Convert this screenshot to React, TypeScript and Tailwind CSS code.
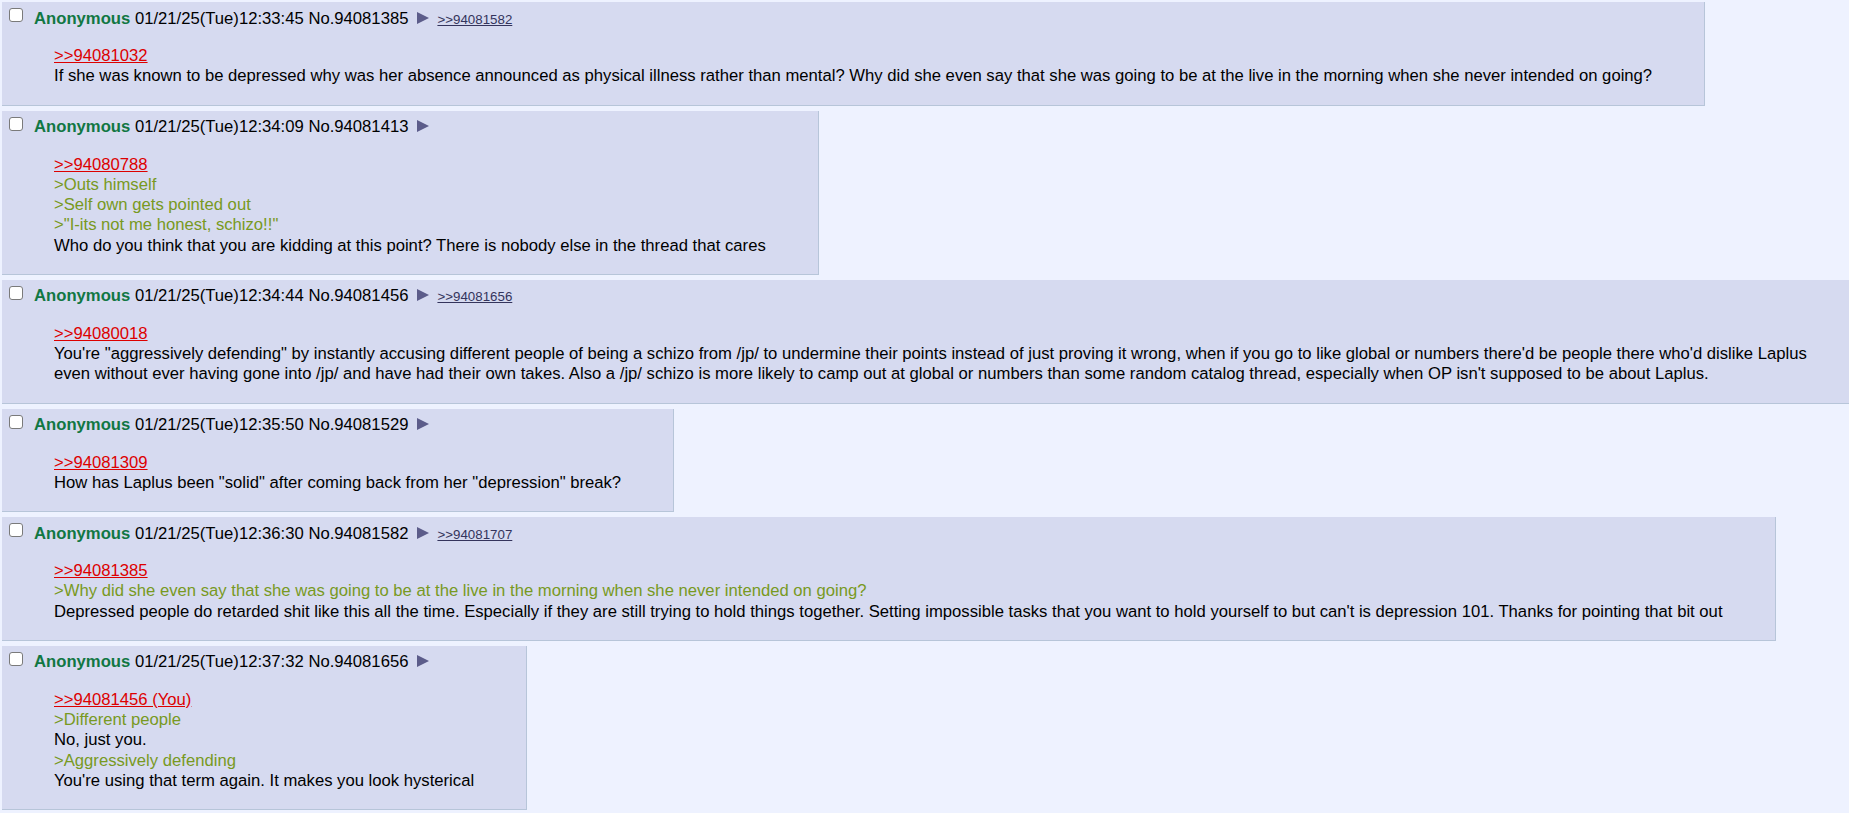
import React from "react";

type Line = { kind: "quote" | "green" | "text"; text: string };
type Post = { time: string; no: string; backlink?: string; lines: Line[] };

const posts: Post[] = [
  {
    time: "01/21/25(Tue)12:33:45",
    no: "94081385",
    backlink: ">>94081582",
    lines: [
      { kind: "quote", text: ">>94081032" },
      {
        kind: "text",
        text: "If she was known to be depressed why was her absence announced as physical illness rather than mental? Why did she even say that she was going to be at the live in the morning when she never intended on going?",
      },
    ],
  },
  {
    time: "01/21/25(Tue)12:34:09",
    no: "94081413",
    lines: [
      { kind: "quote", text: ">>94080788" },
      { kind: "green", text: ">Outs himself" },
      { kind: "green", text: ">Self own gets pointed out" },
      { kind: "green", text: '>"I-its not me honest, schizo!!"' },
      { kind: "text", text: "Who do you think that you are kidding at this point? There is nobody else in the thread that cares" },
    ],
  },
  {
    time: "01/21/25(Tue)12:34:44",
    no: "94081456",
    backlink: ">>94081656",
    lines: [
      { kind: "quote", text: ">>94080018" },
      {
        kind: "text",
        text: "You're \"aggressively defending\" by instantly accusing different people of being a schizo from /jp/ to undermine their points instead of just proving it wrong, when if you go to like global or numbers there'd be people there who'd dislike Laplus even without ever having gone into /jp/ and have had their own takes. Also a /jp/ schizo is more likely to camp out at global or numbers than some random catalog thread, especially when OP isn't supposed to be about Laplus.",
      },
    ],
  },
  {
    time: "01/21/25(Tue)12:35:50",
    no: "94081529",
    lines: [
      { kind: "quote", text: ">>94081309" },
      { kind: "text", text: 'How has Laplus been "solid" after coming back from her "depression" break?' },
    ],
  },
  {
    time: "01/21/25(Tue)12:36:30",
    no: "94081582",
    backlink: ">>94081707",
    lines: [
      { kind: "quote", text: ">>94081385" },
      { kind: "green", text: ">Why did she even say that she was going to be at the live in the morning when she never intended on going?" },
      {
        kind: "text",
        text: "Depressed people do retarded shit like this all the time. Especially if they are still trying to hold things together. Setting impossible tasks that you want to hold yourself to but can't is depression 101. Thanks for pointing that bit out",
      },
    ],
  },
  {
    time: "01/21/25(Tue)12:37:32",
    no: "94081656",
    lines: [
      { kind: "quote", text: ">>94081456 (You)" },
      { kind: "green", text: ">Different people" },
      { kind: "text", text: "No, just you." },
      { kind: "green", text: ">Aggressively defending" },
      { kind: "text", text: "You're using that term again. It makes you look hysterical" },
    ],
  },
];

function Triangle() {
  return (
    <svg width="12" height="12" viewBox="0 0 12 12" className="inline-block ml-[9px] align-baseline">
      <polygon points="0,0 12,6 0,12" fill="#5c5c8a" />
    </svg>
  );
}

function PostView({ p }: { p: Post }) {
  return (
    <div className="w-fit max-w-full bg-[#d6daf0] border-r border-b border-[#b7c5d9] p-[2px]">
      <div className="flex items-start h-[25px]">
        <div className="ml-[5px] mt-[4px] w-[14px] h-[14px] shrink-0 rounded-[3px] border border-[#7a7a7a] bg-white" />
        <div className="ml-[11px] mt-[4.5px] h-[20.25px] leading-[20.25px] whitespace-nowrap">
          <span className="font-bold text-[#117743]">Anonymous</span>
          <span> {p.time} No.{p.no}</span>
          <Triangle />
          {p.backlink && (
            <span className="ml-[8px] text-[13.33px] leading-none text-[#34345c] underline">{p.backlink}</span>
          )}
        </div>
      </div>
      <div className="mt-[17px] mb-[16px] mx-[50px] leading-[20.25px]">
        {p.lines.map((l, i) => (
          <div key={i}>
            {l.kind === "quote" ? (
              <span className="text-[#dd0000] underline">{l.text}</span>
            ) : l.kind === "green" ? (
              <span className="text-[#789922]">{l.text}</span>
            ) : (
              <span className="text-black">{l.text}</span>
            )}
          </div>
        ))}
      </div>
    </div>
  );
}

export default function App() {
  return (
    <div
      className="min-h-screen w-full overflow-hidden bg-[#eef2ff] text-black text-[16.67px]"
      style={{ fontFamily: '"Liberation Sans", Arial, Helvetica, sans-serif' }}
    >
      <div className="w-[1866px] pl-[2px] pt-[2px] flex flex-col items-start gap-[5px]">
        {posts.map((p) => (
          <PostView key={p.no} p={p} />
        ))}
      </div>
    </div>
  );
}
